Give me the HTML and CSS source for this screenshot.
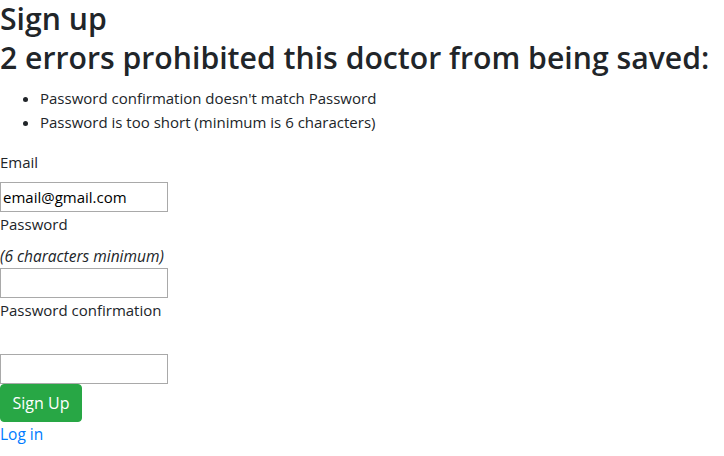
FILE: index.html
```html
<!DOCTYPE html>
<html>
<head>
<meta charset="utf-8">
<link rel="stylesheet" href="styles.css">
</head>
<body>
<h2 class="title">Sign up</h2>
<div class="errors">
  <h2 class="errors-title">2 errors prohibited this doctor from being saved:</h2>
  <ul class="errors-list">
    <li>Password confirmation doesn't match Password</li>
    <li>Password is too short (minimum is 6 characters)</li>
  </ul>
</div>
<form class="form">
  <div class="field">
    <label class="label">Email</label>
    <input class="input" type="email" value="email@gmail.com">
  </div>
  <div class="field">
    <label class="label">Password</label>
    <em class="hint">(6 characters minimum)</em>
    <input class="input" type="password">
  </div>
  <div class="field">
    <label class="label">Password confirmation</label>
    <span class="spacer"></span>
    <input class="input" type="password">
  </div>
  <div class="actions">
    <button class="btn" type="button">Sign Up</button>
  </div>
</form>
<a class="link" href="#">Log in</a>
</body>
</html>
```

FILE: styles.css
```css
html, body {
  margin: 0;
  padding: 0;
  background: #fff;
}
body {
  font-family: "Open Sans", "Noto Sans", sans-serif;
  font-size: 15px;
  line-height: 24px;
  color: #212529;
}
.title, .errors-title {
  font-size: 30.2px;
  font-weight: 600;
  line-height: 38.4px;
  margin: 0;
}
.title {
  margin-bottom: 1px;
}
.errors-title {
  margin-bottom: 8px;
}
.errors-list {
  margin: 0 0 16px;
  padding-left: 40px;
}
.field {
  display: flex;
  flex-direction: column;
  align-items: flex-start;
}
.label {
  display: block;
  margin-bottom: 8px;
}
.hint {
  display: block;
  font-style: italic;
  font-size: 15.5px;
}
.spacer {
  display: block;
  height: 24px;
}
.input {
  box-sizing: border-box;
  width: 168px;
  height: 30px;
  margin: 0;
  padding: 1px 2px;
  border: 1px solid #a9a9a9;
  font-family: inherit;
  font-size: 15px;
  color: #000;
  outline: none;
}
.actions {
  display: flex;
}
.btn {
  box-sizing: border-box;
  font-family: inherit;
  font-size: 16px;
  line-height: 24px;
  white-space: nowrap;
  color: #fff;
  background: #28a745;
  border: 1px solid #28a745;
  border-radius: 4px;
  padding: 6px 0;
  height: 38px;
  width: 82px;
  margin: 0;
}
.link {
  display: block;
  width: max-content;
  color: #007bff;
  text-decoration: none;
  font-size: 15.5px;
}
```
